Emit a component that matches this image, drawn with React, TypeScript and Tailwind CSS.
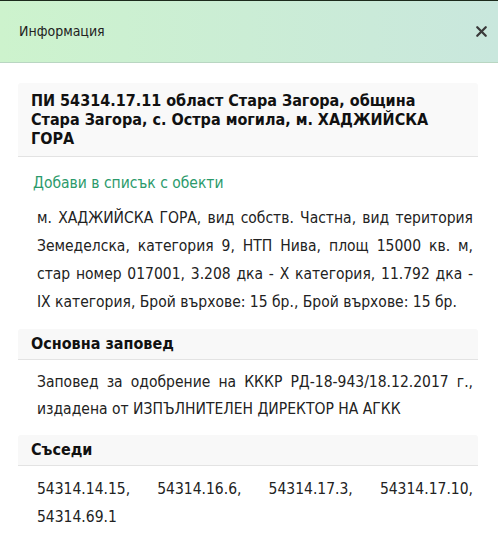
import { X } from 'lucide-react';

const font = { fontFamily: '"DejaVu Sans Condensed", "DejaVu Sans", Tahoma, sans-serif' };

function SectionTitle({ children }: { children: React.ReactNode }) {
    return (
        <div className="bg-[#f8f8f8] border-b border-[#e3e3e3] px-[13px] py-[5px] rounded-t-[3px]">
            <h3 className="text-[16px] leading-[20px] font-bold text-[#111]">{children}</h3>
        </div>
    );
}

export default function App() {
    return (
        <div className="w-[498px] h-[557px] bg-white overflow-hidden text-[#222]" style={font}>
            {/* Header */}
            <header className="h-[63px] border-t border-[#1c2a1c] border-b border-b-[#b9d6c2] bg-gradient-to-r from-[#cdf3cd] to-[#c9e7dd] flex items-center justify-between pl-[19px] pr-[4px]">
                <span className="text-[14px] text-[#222]">Информация</span>
                <button className="p-1 text-[#3a3a3a]">
                    <X className="h-[17px] w-[17px]" strokeWidth={3.2} />
                </button>
            </header>

            <main className="px-[18px] pr-[20px] pt-[20px]">
                <div className="bg-[#f9f9f9] border-b border-[#e3e3e3] px-[13px] pt-[8px] pb-[8px] rounded-t-[3px]">
                    <h2 className="text-[16px] leading-[19px] font-bold text-[#111]">
                        ПИ 54314.17.11 област Стара Загора, община Стара Загора, с. Остра могила, м. ХАДЖИЙСКА ГОРА
                    </h2>
                </div>

                <a className="block mt-[16px] ml-[15px] text-[15.5px] leading-[20px] text-[#2b9a6b]">
                    Добави в списък с обекти
                </a>

                <p className="mt-[11px] pl-[19px] pr-[5px] text-[15.5px] leading-[28px] text-justify">
                    м. ХАДЖИЙСКА ГОРА, вид собств. Частна, вид територия Земеделска, категория 9, НТП Нива, площ 15000 кв. м, стар номер 017001, 3.208 дка - X категория, 11.792 дка - IX категория, Брой върхове: 15 бр., Брой върхове: 15 бр.
                </p>

                <div className="mt-[13px]">
                    <SectionTitle>Основна заповед</SectionTitle>
                    <p className="pl-[19px] pr-[5px] pt-[9px] text-[15.5px] leading-[27px] text-justify">
                        Заповед за одобрение на КККР РД-18-943/18.12.2017 г., издадена от ИЗПЪЛНИТЕЛЕН ДИРЕКТОР НА АГКК
                    </p>
                </div>

                <div className="mt-[12px]">
                    <SectionTitle>Съседи</SectionTitle>
                    <p className="pl-[19px] pr-[5px] pt-[9px] text-[15.5px] leading-[28px] text-justify">
                        54314.14.15, 54314.16.6, 54314.17.3, 54314.17.10, 54314.69.1
                    </p>
                </div>
            </main>
        </div>
    );
}
